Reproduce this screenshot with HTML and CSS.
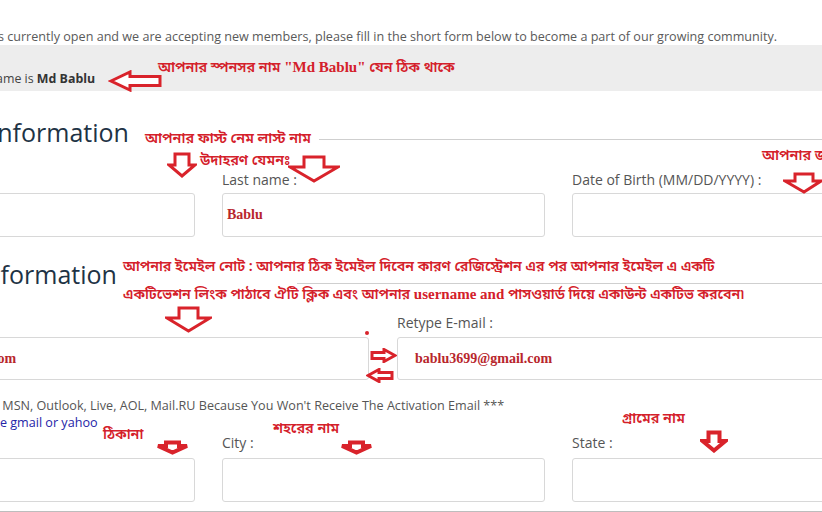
FILE: index.html
```html
<!DOCTYPE html>
<html lang="en">
<head>
<meta charset="utf-8">
<title>Registration</title>
<link rel="stylesheet" href="styles.css">
</head>
<body>
<div class="page">
  <p class="intro">Registration is currently open and we are accepting new members, please fill in the short form below to become a part of our growing community.</p>
  <div class="sponsor">Your sponsor name is <b>Md Bablu</b></div>

  <div class="section-head">
    <h2>Personal Information</h2>
    <span class="rule rule-1"></span>
  </div>
  <div class="row three">
    <div class="field"><label>First name :</label><div class="input"></div></div>
    <div class="field"><label>Last name :</label><div class="input"><span class="val">Bablu</span></div></div>
    <div class="field"><label>Date of Birth (MM/DD/YYYY) :</label><div class="input"></div></div>
  </div>

  <div class="section-head two">
    <h2>Contact Information</h2>
    <span class="rule rule-2"></span>
  </div>
  <div class="row pair">
    <div class="field"><label>E-mail :</label><div class="input short first"><span class="val">bablu3699@gmail.com</span></div></div>
    <div class="field"><label>Retype E-mail :</label><div class="input short"><span class="val">bablu3699@gmail.com</span></div></div>
  </div>
  <p class="note">*** Do Not Use Hotmail, MSN, Outlook, Live, AOL, Mail.RU Because You Won't Receive The Activation Email ***</p>
  <p class="hint">Please use gmail or yahoo</p>
  <div class="row three tight">
    <div class="field"><label>Address :</label><div class="input"></div></div>
    <div class="field"><label>City :</label><div class="input"></div></div>
    <div class="field"><label>State :</label><div class="input"></div></div>
  </div>
  <div class="bottom-rule"></div>

  <div class="notes">
    <span class="bn n1">আপনার স্পনসর নাম <b class="en">"Md Bablu"</b> যেন ঠিক  থাকে</span>
    <svg class="ar a-sponsor" viewBox="0 0 54 22"><polygon points="3,11 22,2 22,6.5 52,6.5 52,15.5 22,15.5 22,20"/></svg>

    <span class="bn n2 bg">আপনার  ফাস্ট নেম লাস্ট  নাম</span>
    <span class="bn n3">উদাহরণ যেমনঃ</span>
    <svg class="ar a-first" viewBox="0 0 30 26"><polygon points="8,2 22,2 22,13 28,13 15,24 2,13 8,13"/></svg>
    <svg class="ar a-last" viewBox="0 0 52 28"><polygon points="16,2 36,2 36,12 50,12 26,26 2,12 16,12"/></svg>
    <span class="bn n4">আপনার জন্ম তারিখ</span>
    <svg class="ar a-dob" viewBox="0 0 40 22"><polygon points="12,2 30,2 30,9 38,9 21,20 2,9 12,9"/></svg>

    <span class="bn n5">আপনার ইমেইল নোট : আপনার ঠিক ইমেইল দিবেন কারণ রেজিস্ট্রেশন এর  পর আপনার ইমেইল এ একটি<br>একটিভেশন লিংক পাঠাবে  ঐটি ক্লিক এবং আপনার <b class="en">username and</b> পাসওয়ার্ড দিয়ে একাউন্ট একটিভ করবেন৷</span>
    <svg class="ar a-mail" viewBox="0 0 47 27"><polygon points="14,2 33,2 33,12 45,12 23.5,25 2,12 14,12"/></svg>
    <span class="dot"></span>
    <svg class="ar a-right" viewBox="0 0 27 15"><polygon points="2,4.5 14,4.5 14,1.5 25,7.5 14,13.5 14,10.5 2,10.5"/></svg>
    <svg class="ar a-left" viewBox="0 0 28 15"><polygon points="26,4.5 13,4.5 13,1.5 2,7.5 13,13.5 13,10.5 26,10.5"/></svg>

    <span class="bn n6">ঠিকানা</span>
    <svg class="ar thick a-addr" viewBox="0 0 35 15"><polygon points="11,2.5 24,2.5 24,6 32,6 17.5,12.5 3,6 11,6"/></svg>
    <span class="bn n7">শহরের নাম</span>
    <svg class="ar thick a-city" viewBox="0 0 35 15"><polygon points="11,2.5 24,2.5 24,6 32,6 17.5,12.5 3,6 11,6"/></svg>
    <span class="bn n8">গ্রামের  নাম</span>
    <svg class="ar thick a-state" viewBox="0 0 28 23"><polygon points="8.5,2.5 19.5,2.5 19.5,11 25.5,11 14,20.5 2.5,11 8.5,11"/></svg>
  </div>
</div>
</body>
</html>
```

FILE: styles.css
```css
html, body {
  margin: 0;
  padding: 0;
  background: #ffffff;
}
body {
  width: 822px;
  height: 512px;
  overflow: hidden;
  font-family: "Open Sans", "Liberation Sans", sans-serif;
  color: #555555;
}
.page {
  position: relative;
  margin-left: -128px;
  width: 1023px;
}
.intro {
  margin: 0;
  padding: 28px 0 0 49px;
  font-size: 12.6px;
  line-height: 17px;
  white-space: nowrap;
  color: #5a5a5a;
}
.sponsor {
  background: #ededed;
  height: 46px;
  box-sizing: border-box;
  padding: 25px 0 0 36px;
  font-size: 12.4px;
  line-height: 18px;
  color: #444;
}
.sponsor b {
  color: #333;
  font-weight: 700;
}
.section-head {
  display: flex;
  align-items: center;
  margin-top: 25px;
  height: 32px;
}
.section-head.two {
  margin-top: 21px;
}
.section-head h2 {
  margin: 0 0 0 10px;
  font-weight: 400;
  font-size: 25px;
  line-height: 32px;
  color: #1e3345;
  white-space: nowrap;
}
.rule {
  flex: 1;
  border-top: 1px solid #cfcfcf;
}
.rule-1 {
  margin: 14px 0 0 190px;
}
.rule-2 {
  margin: 18px 0 0 180px;
}
.row {
  display: grid;
  column-gap: 27px;
  margin-top: 22px;
}
.row.three {
  grid-template-columns: 323px 323px 323px;
}
.row.pair {
  grid-template-columns: 497px 498px;
  column-gap: 28px;
  margin-top: 23px;
}
.row.tight {
  margin-top: 2px;
}
.field label {
  display: block;
  font-size: 14px;
  line-height: 20px;
  color: #555;
  white-space: nowrap;
}
.input {
  margin-top: 3px;
  height: 44px;
  box-sizing: border-box;
  border: 1px solid #d8d8d8;
  border-radius: 3px;
  background: #fff;
  display: flex;
  align-items: center;
  padding-left: 4px;
}
.input.short {
  margin-top: 4px;
  height: 43px;
  padding-left: 17px;
}
.input.short.first {
  padding-left: 6px;
}
.row.tight .input {
  margin-top: 5px;
}
.val {
  font-family: "Liberation Serif", serif;
  font-weight: 700;
  font-size: 14px;
  color: #b8262c;
  white-space: nowrap;
}
.note {
  margin: 17px 0 0 0;
  padding-left: 0;
  text-indent: -17px;
  font-size: 12.6px;
  line-height: 17px;
  white-space: nowrap;
  color: #555;
}
.hint {
  margin: 0;
  font-size: 12.6px;
  line-height: 17px;
  color: #2424a8;
  padding-left: 73px;
  white-space: nowrap;
}
.bottom-rule {
  margin-top: 9px;
  border-top: 1px solid #bdbdbd;
}

/* annotation overlay, coordinates relative to the visible viewport */
.notes {
  position: absolute;
  left: 128px;
  top: 0;
  width: 822px;
  height: 512px;
  pointer-events: none;
}
.bn {
  position: absolute;
  font-family: "Noto Sans Bengali", "Noto Serif Bengali", "Lohit Bengali", "FreeSerif", sans-serif;
  font-size: 14.4px;
  font-weight: 600;
  line-height: 20px;
  color: #d4202a;
  white-space: nowrap;
}
.bn .en {
  font-family: "Liberation Serif", serif;
  font-weight: 700;
  font-size: 15px;
}
.bg {
  background: #fff;
  padding-right: 2px;
}
.n1 { left: 158px; top: 57px; }
.n2 { left: 145px; top: 130px; }
.n3 { left: 200px; top: 152px; }
.n4 { left: 762px; top: 147px; }
.n5 { left: 123px; top: 254px; line-height: 27px; font-size: 14.2px; }
.n6 { left: 103px; top: 426px; }
.n7 { left: 273px; top: 420px; }
.n8 { left: 622px; top: 410px; }

.ar {
  position: absolute;
  fill: #ffffff;
  stroke: #d9232b;
  stroke-width: 3;
  stroke-linejoin: miter;
}
.ar.thick {
  stroke-width: 4;
}
.a-sponsor { left: 108px; top: 70px; width: 54px; height: 22px; }
.a-first { left: 167px; top: 152px; width: 30px; height: 26px; }
.a-last { left: 288px; top: 155px; width: 52px; height: 28px; }
.a-dob { left: 783px; top: 172px; width: 40px; height: 22px; }
.a-mail { left: 165px; top: 306px; width: 47px; height: 27px; }
.a-right { left: 370px; top: 348px; width: 27px; height: 15px; }
.a-left { left: 366px; top: 368px; width: 28px; height: 15px; }
.a-addr { left: 155px; top: 440px; width: 35px; height: 15px; }
.a-city { left: 339px; top: 440px; width: 35px; height: 15px; }
.a-state { left: 700px; top: 430px; width: 28px; height: 23px; }
.dot {
  position: absolute;
  left: 365px;
  top: 331px;
  width: 4px;
  height: 4px;
  border-radius: 50%;
  background: #d9232b;
}
```
